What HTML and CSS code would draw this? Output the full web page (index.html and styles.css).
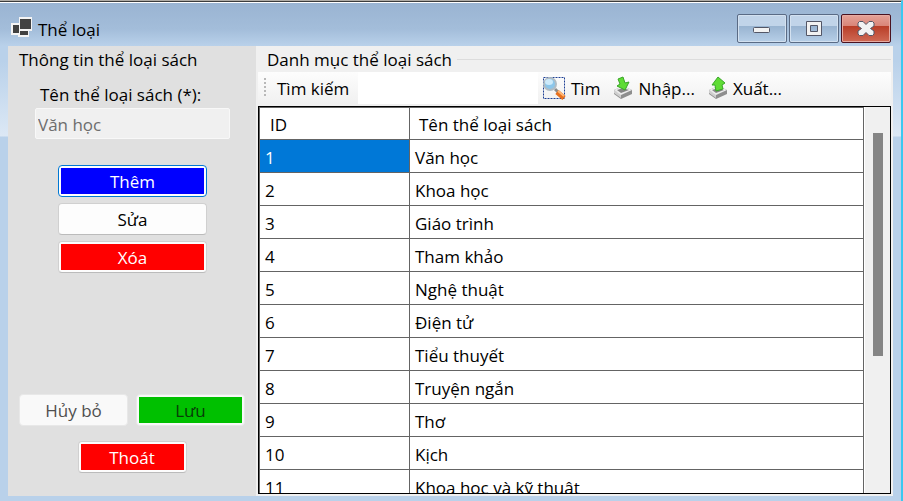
FILE: index.html
```html
<!DOCTYPE html>
<html lang="vi">
<head>
<meta charset="utf-8">
<title>Thể loại</title>
<link rel="stylesheet" href="styles.css">
</head>
<body>
<div class="window">
  <header class="titlebar">
    <svg class="app-icon" width="22" height="20" viewBox="0 0 22 20" aria-hidden="true">
      <path d="M0 6h8V0h13v14h-3v6H7v-2H0z" fill="#f4f4f4"/>
      <path d="M2 8h6v8H2zM9 2h11v10H9zM9 14h8v4H9z" fill="#414141"/>
    </svg>
    <h1 class="title">Thể loại</h1>
    <div class="window-controls">
      <button class="control" type="button" aria-label="Thu nhỏ">
        <svg width="18" height="18" viewBox="0 0 18 18"><rect x="0.500" y="7.500" width="16" height="5" rx="1" fill="#f2f2f2" stroke="#535666"/></svg>
      </button>
      <button class="control" type="button" aria-label="Phóng to">
        <svg width="18" height="18" viewBox="0 0 18 18"><path d="M1.500 1.500h15v14h-15zM5.500 5.500v6h7v-6z" fill="#f2f2f2" fill-rule="evenodd" stroke="#535666" stroke-linejoin="round"/></svg>
      </button>
      <button class="control control-close" type="button" aria-label="Đóng">
        <svg width="18" height="18" viewBox="0 0 18 18"><path d="M2.500 1.500h3.500l3 3 3-3h3.500l1.500 1.500v3l-3.500 2.500 3.500 2.500v3l-1.500 1.500h-3.500l-3-3-3 3H2.500L1 14v-3l3.500-2.500L1 6V3z" fill="#f2f2f2" stroke="#535666" stroke-linejoin="round"/></svg>
      </button>
    </div>
  </header>
  <main class="client">
    <form class="panel editor">
      <h2 class="caption">Thông tin thể loại sách</h2>
      <div class="field">
        <label class="field-label" for="name">Tên thể loại sách (*):</label>
        <input class="field-input" id="name" type="text" value="Văn học" disabled>
      </div>
      <div class="actions">
        <button class="button button-focus blue" type="button"><span>Thêm</span></button>
        <button class="button" type="button"><span>Sửa</span></button>
        <button class="button red" type="button"><span>Xóa</span></button>
      </div>
      <div class="footer">
        <button class="button" type="button" disabled><span>Hủy bỏ</span></button>
        <button class="button green" type="button" disabled><span>Lưu</span></button>
        <button class="button red exit" type="button"><span>Thoát</span></button>
      </div>
    </form>
    <section class="panel catalog">
      <h2 class="caption">Danh mục thể loại sách</h2>
      <div class="toolbar">
        <span class="grip"></span>
        <label class="search-label" for="search">Tìm kiếm</label>
        <input class="search" id="search" type="text">
        <button class="tool" type="button">
          <svg width="24" height="24" viewBox="0 0 24 24" aria-hidden="true">
            <rect x="1.500" y="1.500" width="21" height="21" fill="none" stroke="#1c3f94" stroke-dasharray="2 1"/>
            <path d="M13 13l4 4" stroke="#8b8b8b" stroke-width="3"/>
            <path d="M15 16l7 6" stroke="#e8701c" stroke-width="5"/>
            <path d="M16 15l6 5" stroke="#ffb878" stroke-width="2"/>
            <circle cx="8" cy="8" r="6" fill="#8cc6ea" stroke="#b0bcc4" stroke-width="2"/>
            <ellipse cx="7" cy="6" rx="4" ry="3" fill="#cdeafa"/>
          </svg>
          <span>Tìm</span>
        </button>
        <button class="tool" type="button">
          <svg width="20" height="24" viewBox="0 0 20 24" aria-hidden="true">
            <path d="M1 14l9-4 9 4v4l-11 5-7-5z" fill="#8e8e8e"/>
            <path d="M1 14v3l7 5v-4z" fill="#cfcfcf"/>
            <path d="M1 14l9-4 9 4-11 5z" fill="#ececec"/>
            <path d="M4 14l6-2 6 2-8 3z" fill="#858585"/>
            <path d="M5 3l5-2 2 6 4-1-4 8-8-4 3-2z" fill="#5fdc35" stroke="#3aa628"/>
          </svg>
          <span>Nhập...</span>
        </button>
        <button class="tool" type="button">
          <svg width="20" height="24" viewBox="0 0 20 24" aria-hidden="true">
            <path d="M1 14l9-4 9 4v4l-11 5-7-5z" fill="#8e8e8e"/>
            <path d="M1 14v3l7 5v-4z" fill="#cfcfcf"/>
            <path d="M1 14l9-4 9 4-11 5z" fill="#ececec"/>
            <path d="M4 14l6-2 6 2-8 3z" fill="#858585"/>
            <path d="M10 1l7 6-3 2 1 4-7 2-1-6-3 0z" fill="#5fdc35" stroke="#3aa628"/>
          </svg>
          <span>Xuất...</span>
        </button>
      </div>
      <div class="grid">
        <div class="grid-body">
          <table class="table">
            <thead><tr><th class="id">ID</th><th>Tên thể loại sách</th></tr></thead>
            <tbody>
              <tr><td class="selected">1</td><td>Văn học</td></tr>
              <tr><td>2</td><td>Khoa học</td></tr>
              <tr><td>3</td><td>Giáo trình</td></tr>
              <tr><td>4</td><td>Tham khảo</td></tr>
              <tr><td>5</td><td>Nghệ thuật</td></tr>
              <tr><td>6</td><td>Điện tử</td></tr>
              <tr><td>7</td><td>Tiểu thuyết</td></tr>
              <tr><td>8</td><td>Truyện ngắn</td></tr>
              <tr><td>9</td><td>Thơ</td></tr>
              <tr><td>10</td><td>Kịch</td></tr>
              <tr><td>11</td><td>Khoa học và kỹ thuật</td></tr>
            </tbody>
          </table>
        </div>
        <div class="scrollbar"><div class="thumb"></div></div>
      </div>
    </section>
  </main>
</div>
</body>
</html>
```
FILE: styles.css
```css
* { box-sizing: border-box; }

body {
  margin: 0;
  font: 17px/24px "Open Sans", "Noto Sans", sans-serif;
  color: #000;
}

button, input { font: inherit; color: inherit; }

.window {
  display: flex;
  flex-direction: column;
  height: 100vh;
  padding: 0 8px 5px;
  border-top: 1px solid #b0aca6;
  border-right: 2px solid #3cc8f0;
  background: linear-gradient(#3c3c3c 1px, #fff 1px 2px, #9ab4d2 2px, #a3bdda 28px, #b9d1ea 45px, #b9d1ea 60px, #dce8f5 135px, #b9d1ea 136px);
}

.titlebar {
  display: flex;
  flex: none;
  align-items: center;
  height: 45px;
  padding: 12px 2px 0 3px;
}

.app-icon { margin: 0 5px 6px 0; }

.title {
  flex: 1;
  margin: 0;
  font-size: 17px;
  font-weight: 400;
}

.window-controls { display: flex; gap: 2px; margin-bottom: 2px; }

.control {
  display: grid;
  place-items: center;
  width: 50px;
  height: 29px;
  padding: 0;
  border: 1px solid #5a6b85;
  border-radius: 2px;
  background: linear-gradient(#c1d4e9 0 40%, #98b3d0 40%, #b7cfe8);
  box-shadow: inset 0 0 0 1px #d3e1f0;
}

.control-close {
  border-color: #4a1220;
  background: linear-gradient(#e5a298, #d98578 40%, #b83c26 40%, #cf6a55);
  box-shadow: inset 0 0 0 1px #e6aba2;
}

.client {
  display: flex;
  flex: 1;
  min-height: 0;
}

.panel { display: flex; flex-direction: column; }

.editor {
  flex: none;
  width: 248px;
  padding: 2px 11px 23px;
  background: #e0e0e0;
}

.caption {
  display: flex;
  gap: 5px;
  flex: none;
  margin: 0;
  font-size: 17px;
  font-weight: 400;
  white-space: nowrap;
}

.field {
  display: flex;
  flex-direction: column;
  margin: 11px 15px 0 16px;
}

.field-label { margin-left: 5px; white-space: nowrap; }

.field-input {
  height: 31px;
  margin-top: 1px;
  padding: 2px 2px 0;
  border: 1px solid #f8f8f8;
  border-radius: 2px;
  background: #f0f0f0;
  color: #6d6d6d;
}

.actions {
  display: grid;
  gap: 6px;
  width: 149px;
  margin: 26px 0 0 39px;
}

.button {
  height: 32px;
  padding: 2px;
  border: 1px solid #d0d0d0;
  border-bottom-color: #bbb;
  border-radius: 4px;
  background: #fdfdfd;
}

.button span { display: block; height: 26px; line-height: 28px; }
.button-focus { border-color: #0078d4; }
.button:disabled { border-color: #e8e8e8; background: #f9f9f9; color: #4f4f4f; }
.blue span { background: #00f; color: #fff; }
.red span { background: #f00; color: #fff; }
.button.green:disabled span { background: #00c000; color: #083c08; }

.footer {
  display: grid;
  grid-template-columns: 109px 109px;
  justify-content: space-between;
  row-gap: 15px;
  margin-top: auto;
}

.exit { grid-column: 1 / -1; justify-self: center; width: 109px; }

.catalog {
  flex: 1;
  min-width: 0;
  padding: 2px;
  background: #f0f0f0;
}

.catalog .caption { padding-left: 9px; }

.catalog .caption::after {
  content: "";
  flex: 1;
  height: 1px;
  margin-top: 11px;
  background: #dcdcdc;
}

.toolbar {
  display: flex;
  flex: none;
  align-items: center;
  height: 32px;
  margin-bottom: 2px;
  padding-left: 6px;
  background: linear-gradient(#fdfdfd, #f0f0f0);
}

.grip {
  width: 2px;
  height: 20px;
  margin-right: 11px;
  background: repeating-linear-gradient(#b8b8b8 0 2px, transparent 2px 4px);
}

.search-label { width: 81px; white-space: nowrap; }

.search-label, .tool span { padding-top: 2px; }

.search {
  width: 180px;
  height: 32px;
  padding: 0 4px;
  border: 0;
  background: #fff;
}

.tool {
  display: flex;
  align-items: center;
  gap: 5px;
  margin-left: 4px;
  padding: 0;
  border: 0;
  background: none;
}

.tool + .tool { margin-left: 13px; }

.grid {
  display: flex;
  flex: 1;
  min-height: 0;
  border: 1px solid #000;
  background: #fff;
}

.grid-body { flex: 1; overflow: hidden; border-left: 1px solid #646464; }

.table {
  width: 100%;
  border-spacing: 0;
  border-top: 1px solid #646464;
  table-layout: fixed;
}

.table th, .table td {
  height: 33px;
  padding: 6px 5px 2px;
  border: solid #646464;
  border-width: 0 1px 1px 0;
  font-weight: 400;
  text-align: left;
}

.table th { height: 32px; padding: 5px 9px 2px; }
.table .id { width: 150px; padding-left: 10px; }
.table .selected { background: #0078d7; color: #fff; }

.scrollbar {
  width: 26px;
  padding: 26px 7px 0 8px;
  background: #f0f0f0;
  border-left: 1px solid #fff;
}

.thumb { height: 62%; background: #858585; }
```
